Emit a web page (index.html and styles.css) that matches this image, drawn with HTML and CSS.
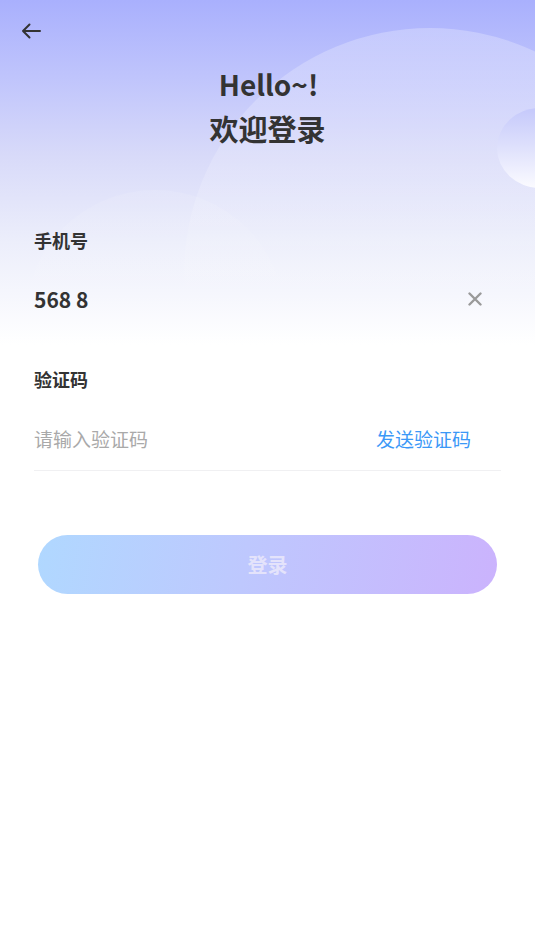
FILE: index.html
```html
<!DOCTYPE html>
<html lang="zh-CN">
<head>
<meta charset="utf-8">
<title>登录</title>
<link rel="stylesheet" href="styles.css">
</head>
<body>
<div class="page">
  <div class="bg">
    <div class="circle big"></div>
    <div class="circle low"></div>
    <div class="circle small"></div>
  </div>
  <div class="topbar">
    <svg class="back" width="20" height="18" viewBox="0 0 20 18">
      <path d="M19 9H2M8.5 2.5L2 9l6.5 6.5" fill="none" stroke="#333" stroke-width="2" stroke-linecap="round" stroke-linejoin="round"/>
    </svg>
  </div>
  <div class="title">
    <div class="hello">Hello~!</div>
    <div class="welcome">欢迎登录</div>
  </div>
  <div class="form">
    <div class="label first">手机号</div>
    <div class="row phone-row">
      <span class="phone">568 8</span>
      <svg class="clear" width="14" height="14" viewBox="0 0 14 14">
        <path d="M1.5 1.5l11 11M12.5 1.5l-11 11" stroke="#9a9a9a" stroke-width="2.4" stroke-linecap="round"/>
      </svg>
    </div>
    <div class="label second">验证码</div>
    <div class="row code-row">
      <span class="placeholder">请输入验证码</span>
      <span class="send">发送验证码</span>
    </div>
  </div>
  <div class="btn-wrap">
    <div class="btn">登录</div>
  </div>
</div>
</body>
</html>
```
FILE: styles.css
```css
* { box-sizing: border-box; }
html, body { margin: 0; padding: 0; background: #fff; }
body {
  font-family: "Noto Sans CJK SC", "Noto Sans", sans-serif;
  color: #333;
}
.page {
  position: relative;
  width: 535px;
  min-height: 951px;
  overflow: hidden;
  background: #fff;
}
.bg {
  position: absolute;
  left: 0; top: 0;
  width: 535px;
  height: 345px;
  background: linear-gradient(180deg, #a9b0fd 0%, #bfc4fc 22%, #d8daf9 45%, #eceefb 70%, #ffffff 100%);
  overflow: hidden;
}
.circle { position: absolute; border-radius: 50%; }
.big {
  left: 184px; top: 28px;
  width: 492px; height: 492px;
  background: linear-gradient(180deg, rgba(255,255,255,0.26) 0%, rgba(255,255,255,0.15) 35%, rgba(255,255,255,0) 60%);
}
.low {
  left: 25px; top: 190px;
  width: 260px; height: 260px;
  background: linear-gradient(180deg, rgba(255,255,255,0.1) 0%, rgba(255,255,255,0) 60%);
}
.small {
  left: 497px; top: 108px;
  width: 86px; height: 80px;
  background: linear-gradient(180deg, #c5c9fb 0%, #dfe1fc 50%, #fbfbff 100%);
}
.topbar {
  position: relative;
  height: 62px;
  padding: 22px 0 0 21px;
}
.back { display: block; }
.title {
  position: relative;
  text-align: center;
  font-weight: 700;
  color: #333;
}
.hello { font-size: 28px; line-height: 44px; margin-left: 2px; }
.welcome { font-size: 29px; line-height: 44px; }
.form {
  position: relative;
  padding: 0 34px;
}
.label {
  font-size: 18px;
  font-weight: 700;
  line-height: 26px;
  color: #333;
}
.label.first { margin-top: 77px; }
.label.second { margin-top: 37px; }
.row {
  display: flex;
  align-items: center;
  justify-content: space-between;
}
.phone-row { height: 60px; margin-top: 16px; padding-right: 19px; }
.phone { font-size: 21px; font-weight: 700; color: #333; }
.clear { display: block; }
.code-row {
  height: 65px;
  margin-top: 14px;
  border-bottom: 1px solid #f0f0f2;
  padding-right: 30px;
}
.placeholder { font-size: 19px; color: #a9a9a9; }
.send { font-size: 19px; color: #3b98f7; }
.btn-wrap { padding: 64px 38px 0; position: relative; }
.btn {
  height: 59px;
  border-radius: 30px;
  background: linear-gradient(100deg, #b0d8ff 0%, #bec8fe 45%, #cbb3fd 100%);
  color: #e4e3fb;
  font-size: 20px;
  font-weight: 700;
  display: flex;
  align-items: center;
  justify-content: center;
}
```
